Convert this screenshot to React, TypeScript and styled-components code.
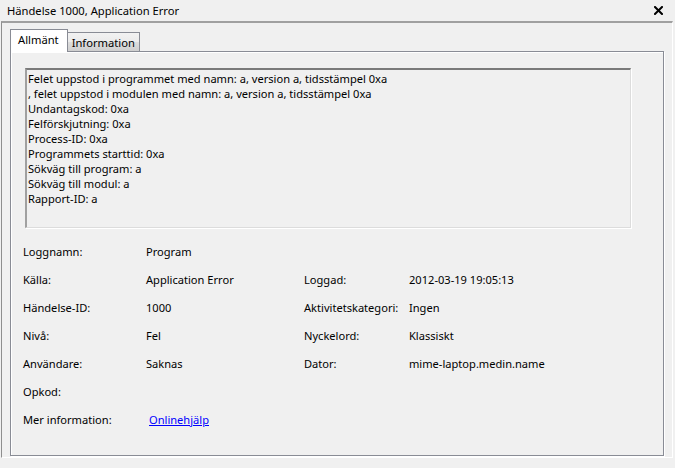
import styled, { createGlobalStyle } from "styled-components";

const GlobalStyle = createGlobalStyle`
  html, body {
    margin: 0;
    padding: 0;
    background: #f0f0f0;
  }
  body {
    font-family: "Noto Sans", "Liberation Sans", sans-serif;
    font-size: 11px;
    color: #000;
  }
`;

const Window = styled.div`
  width: 675px;
  height: 468px;
  display: flex;
  flex-direction: column;
  background: #f0f0f0;
  overflow: hidden;
`;

const TitleBar = styled.div`
  height: 21px;
  display: flex;
  align-items: center;
  justify-content: space-between;
  padding: 1px 12px 0 7px;
  box-sizing: border-box;
`;

const Title = styled.span`
  line-height: 20px;
  font-size: 11.2px;
`;

const CloseButton = styled.span`
  display: flex;
  width: 9px;
  height: 9px;
  margin-top: -1px;
`;

const Body = styled.div`
  flex: 1;
  margin-left: 1px;
  margin-right: 2px;
  margin-bottom: 10px;
  border-top: 2px solid #a0a0a0;
  border-left: 1px solid #8e8e8e;
  border-right: 1px solid #ffffff;
  border-bottom: 1px solid #ffffff;
  padding: 7px 8px 0 8px;
  display: flex;
  flex-direction: column;
`;

const TabRow = styled.div`
  display: flex;
  align-items: flex-end;
  height: 22px;
  margin-bottom: -1px;
  position: relative;
  z-index: 1;
`;

const Tab = styled.div<{ $active?: boolean }>`
  box-sizing: border-box;
  border: 1px solid #898c95;
  border-bottom: ${(p) => (p.$active ? "none" : "1px solid #898c95")};
  margin-right: ${(p) => (p.$active ? "-1px" : "0")};
  height: ${(p) => (p.$active ? "23px" : "20px")};
  padding: ${(p) => (p.$active ? "0 8px 0 7px" : "0 4px 0 4px")};
  background: ${(p) =>
    p.$active ? "#ffffff" : "linear-gradient(#f2f2f2, #ebebeb 50%, #dddddd 51%, #cfcfcf)"};
  line-height: ${(p) => (p.$active ? "20px" : "19px")};
  font-size: 11.2px;
  position: relative;
  z-index: ${(p) => (p.$active ? 2 : 1)};
`;

const Panel = styled.div`
  width: 654px;
  height: 405px;
  box-sizing: border-box;
  border: 1px solid #898c95;
  box-shadow: inset 1px 1px 0 #ffffff, 1px 1px 0 #ffffff;
  padding: 16px 32px 0 14px;
`;

const MessageBox = styled.div`
  height: 160px;
  box-sizing: border-box;
  border-top: 2px solid #7a7a7a;
  border-left: 2px solid #a0a0a0;
  border-right: 1px solid #dcdcdc;
  border-bottom: 1px solid #dcdcdc;
  box-shadow: 1px 1px 0 #ffffff;
  padding: 1px 1px;
  line-height: 15px;
  font-size: 11.1px;
`;

const MessageLine = styled.div`
  white-space: nowrap;
`;

const Fields = styled.div`
  display: grid;
  grid-template-columns: 123px 158px 105px auto;
  grid-auto-rows: 28px;
  margin: 16px 0 0 -2px;
  line-height: 15px;
  font-size: 11.1px;
`;

const Label = styled.div`
  white-space: nowrap;
`;

const Value = styled.div`
  white-space: nowrap;
`;

const Link = styled.a`
  color: #0000ff;
  text-decoration: underline;
  margin-left: 3px;
  cursor: pointer;
`;

const messageLines = [
  "Felet uppstod i programmet med namn: a, version a, tidsstämpel 0xa",
  ", felet uppstod i modulen med namn: a, version a, tidsstämpel 0xa",
  "Undantagskod: 0xa",
  "Felförskjutning: 0xa",
  "Process-ID: 0xa",
  "Programmets starttid: 0xa",
  "Sökväg till program: a",
  "Sökväg till modul: a",
  "Rapport-ID: a",
];

type Row = [string, React.ReactNode, string, string];

const rows: Row[] = [
  ["Loggnamn:", "Program", "", ""],
  ["Källa:", "Application Error", "Loggad:", "2012-03-19 19:05:13"],
  ["Händelse-ID:", "1000", "Aktivitetskategori:", "Ingen"],
  ["Nivå:", "Fel", "Nyckelord:", "Klassiskt"],
  ["Användare:", "Saknas", "Dator:", "mime-laptop.medin.name"],
  ["Opkod:", "", "", ""],
  ["Mer information:", <Link key="l">Onlinehjälp</Link>, "", ""],
];

const CloseIcon = () => (
  <svg width="9" height="9" viewBox="0 0 9 9">
    <path d="M1 1 L8 8 M8 1 L1 8" stroke="#000" strokeWidth="2" strokeLinecap="square" />
  </svg>
);

const App = () => {
  return (
    <>
      <GlobalStyle />
      <Window>
        <TitleBar>
          <Title>Händelse 1000, Application Error</Title>
          <CloseButton>
            <CloseIcon />
          </CloseButton>
        </TitleBar>
        <Body>
          <TabRow>
            <Tab $active>Allmänt</Tab>
            <Tab>Information</Tab>
          </TabRow>
          <Panel>
            <MessageBox>
              {messageLines.map((line) => (
                <MessageLine key={line}>{line}</MessageLine>
              ))}
            </MessageBox>
            <Fields>
              {rows.flatMap(([l1, v1, l2, v2], i) => [
                <Label key={`l1-${i}`}>{l1}</Label>,
                <Value key={`v1-${i}`}>{v1}</Value>,
                <Label key={`l2-${i}`}>{l2}</Label>,
                <Value key={`v2-${i}`}>{v2}</Value>,
              ])}
            </Fields>
          </Panel>
        </Body>
      </Window>
    </>
  );
};

export default App;
